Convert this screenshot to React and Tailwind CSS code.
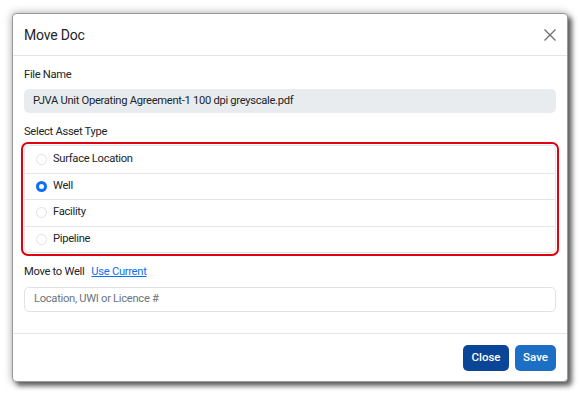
const assetTypes = ["Surface Location", "Well", "Facility", "Pipeline"];

function Radio({ checked }) {
  if (checked) {
    return (
      <span className="flex h-[11px] w-[11px] items-center justify-center rounded-full bg-[#0d6efd]">
        <span className="h-[5px] w-[5px] rounded-full bg-white" />
      </span>
    );
  }
  return <span className="h-[11px] w-[11px] rounded-full border border-[#dee2e6] bg-white" />;
}

function CloseIcon() {
  return (
    <svg width="12" height="12" viewBox="0 0 12 12" className="text-[#6b6f73]">
      <path d="M0.5 0.5 L11.5 11.5 M11.5 0.5 L0.5 11.5" stroke="currentColor" strokeWidth="1.3" fill="none" />
    </svg>
  );
}

export default function App() {
  return (
    <div className="h-[396px] w-[580px] bg-white pt-[13px] pl-[12px] font-['Roboto',sans-serif] text-[#212529]">
      <div className="w-[556px] rounded-[4px] border border-[#9a9a9a] bg-white shadow-[0_0_8px_rgba(0,0,0,0.35),4px_4px_5px_rgba(0,0,0,0.55)]">
        {/* header */}
        <div className="flex h-[42px] items-center justify-between border-b border-[#e3e6e9] pl-[11px] pr-[11px]">
          <h2 className="text-[14px] leading-none tracking-[-0.2px]">Move Doc</h2>
          <CloseIcon />
        </div>

        {/* body */}
        <div className="px-[11px] pt-[11px] pb-[21px] text-[11.2px] tracking-[-0.3px]">
          <label className="block leading-[16px]">File Name</label>
          <div className="mt-[6px] flex h-[24px] items-center rounded-[5px] bg-[#e9ecef] px-[9px]">
            PJVA Unit Operating Agreement-1 100 dpi greyscale.pdf
          </div>

          <label className="mt-[11px] block leading-[16px]">Select Asset Type</label>
          <div className="mt-[2px] -mx-[3px] rounded-[7px] border-2 border-[#e0000f] p-px">
            <div className="overflow-hidden rounded-[4px] border border-[#e3e6e9]">
              {assetTypes.map((t, i) => (
                <div
                  key={t}
                  className={`flex h-[26.5px] items-center gap-[6px] pl-[11px] ${i > 0 ? "border-t border-[#e3e6e9]" : ""}`}
                >
                  <Radio checked={t === "Well"} />
                  <span>{t}</span>
                </div>
              ))}
            </div>
          </div>

          <div className="mt-[8px] flex items-center gap-[7px] leading-[16px]">
            <span>Move to Well</span>
            <a className="text-[#0d6efd] underline">Use Current</a>
          </div>
          <div className="mt-[7px] flex h-[25px] items-center rounded-[5px] border border-[#dee2e6] px-[9px] text-[#6c757d]">
            Location, UWI or Licence #
          </div>
        </div>

        {/* footer */}
        <div className="flex h-[48px] items-start justify-end gap-[6px] border-t border-[#e3e6e9] pr-[11px] pt-[11px]">
          <button className="h-[26px] w-[46px] rounded-[5px] bg-[#0b4597] text-[11.5px] font-medium text-white">
            Close
          </button>
          <button className="h-[26px] w-[41px] rounded-[5px] bg-[#1c6fc4] text-[11.5px] font-medium text-white">
            Save
          </button>
        </div>
      </div>
    </div>
  );
}
